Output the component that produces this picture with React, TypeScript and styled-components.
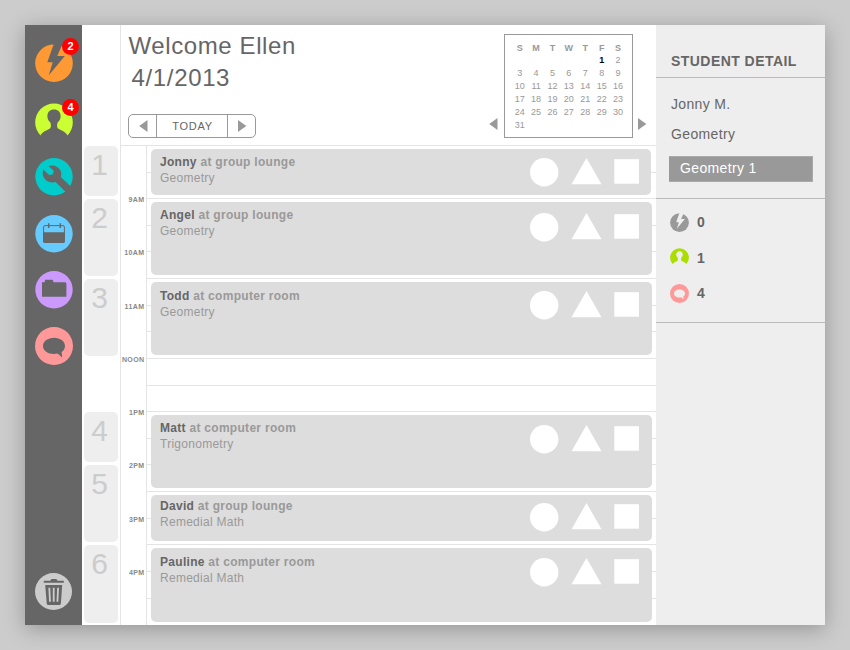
import React from "react";
import styled, { createGlobalStyle } from "styled-components";

const GlobalStyle = createGlobalStyle`
  * { box-sizing: border-box; }
  body {
    margin: 0;
    background: #cccccc;
    font-family: "Liberation Sans", Arial, sans-serif;
    color: #666666;
  }
`;

const Page = styled.div`
  width: 850px;
  height: 650px;
  padding: 25px;
  overflow: hidden;
`;

const Window = styled.div`
  display: grid;
  grid-template-columns: 57px 574px 169px;
  width: 800px;
  height: 600px;
  background: #ffffff;
  box-shadow: 0 4px 20px rgba(0, 0, 0, 0.27);
`;

/* ---------- Sidebar ---------- */

const Sidebar = styled.nav`
  display: flex;
  flex-direction: column;
  justify-content: space-between;
  align-items: center;
  padding: 19px 0 15px;
  background: #666666;
`;

const NavList = styled.div`
  display: grid;
  grid-template-rows: 59px 55px 57px 56px 56px 38px;
`;

const NavItem = styled.div`
  position: relative;
  width: 38px;
  height: 38px;
`;

const Badge = styled.span<{ $top: number }>`
  position: absolute;
  top: ${(p) => p.$top}px;
  right: -6.5px;
  width: 17px;
  height: 17px;
  border-radius: 50%;
  background: #ff0000;
  color: #ffffff;
  font-size: 11px;
  font-weight: bold;
  line-height: 17px;
  text-align: center;
`;

const Icon = styled.svg<{ $size?: number }>`
  display: block;
  width: ${(p) => p.$size ?? 38}px;
  height: ${(p) => p.$size ?? 38}px;
`;

interface IconProps {
  color: string;
  cut?: string;
  size?: number;
}

const BoltIcon = ({ color, cut = "#666666", size }: IconProps) => (
  <Icon $size={size} viewBox="0 0 38 38">
    <circle cx="19" cy="19.2" r="18.8" fill={color} />
    <path d="M19-.6 12.3 18.300h5.400L13.800 31.300 29.800 11.900h-7.600L28-1z" fill={cut} />
  </Icon>
);

const PersonIcon = ({ color, cut = "#666666", size }: IconProps) => (
  <Icon $size={size} viewBox="0 0 38 38">
    <circle cx="19" cy="19.4" r="18.8" fill={color} />
    <path
      d="M19 6.600c-4 0-6.600 2.700-6.600 6.600 0 3 1.300 4.700 3 6.200.7 2.800.8 5-.4 6-2.200 1.600-6.500 2.300-9.500 6.600L4 39h30l-1.500-7c-3-4.300-7.300-5-9.500-6.600-1.200-1-1.100-3.200-.4-6 1.700-1.500 3-3.200 3-6.200 0-3.900-2.600-6.600-6.600-6.600z"
      fill={cut}
    />
  </Icon>
);

const WrenchIcon = ({ color }: IconProps) => (
  <Icon viewBox="0 0 38 38">
    <circle cx="19" cy="18.700" r="18.700" fill={color} />
    <path
      d="M13.500 8c5-1.700 10 .3 12 4.600 1 2.400.9 4.500.3 6.400L36 28.800 31 34.300 20.600 24.100c-3.700 1.200-8 .2-10.600-2.800-2.500-3-2.800-6.400-1.700-9.700l5.800 5.400 3.600-.4 1.100-3.700z"
      fill="#666666"
    />
  </Icon>
);

const CalendarIcon = ({ color }: IconProps) => (
  <Icon viewBox="0 0 38 38">
    <circle cx="19" cy="18.700" r="18.700" fill={color} />
    <rect x="8.600" y="10.600" width="20.800" height="16.600" rx="1.500" fill={color} stroke="#666666" />
    <path d="M8.100 17.300h21.800v9.200a1.500 1.500 0 0 1-1.500 1.500H9.600a1.500 1.500 0 0 1-1.500-1.500z" fill="#666666" />
    <path d="M13.700 8.300v4.700M25.300 8.300v4.700" stroke="#666666" strokeWidth="1.500" />
  </Icon>
);

const FolderIcon = ({ color }: IconProps) => (
  <Icon viewBox="0 0 38 38">
    <circle cx="19" cy="18.700" r="18.700" fill={color} />
    <path d="M7 11.200h2.500l.8-2.400h7.400l.8 2.400h12.300v1h.6v13.600H7z" fill="#666666" />
  </Icon>
);

const SpeechIcon = ({ color, cut = "#666666", size }: IconProps) => (
  <Icon $size={size} viewBox="0 0 38 38">
    <circle cx="19" cy="19" r="19" fill={color} />
    <path
      d="M19 10.800c6.200 0 11 3.600 11 8.100 0 2.500-1.300 4.700-3.400 6.100l.7 5.500-4.800-4c-1.100.3-2.300.4-3.500.4-6.200 0-11-3.500-11-8s4.800-8.100 11-8.100z"
      fill={cut}
    />
  </Icon>
);

const TrashIcon = ({ color }: IconProps) => (
  <Icon $size={37} viewBox="0 0 37 37">
    <circle cx="18.500" cy="18.500" r="18.500" fill={color} />
    <path d="M8.800 7.800h6.400l1.300-1.700h4.800l1.300 1.700h6.200v2H8.800z" fill="#666666" />
    <path d="M10.200 12h17l-1.300 18.500a1.800 1.800 0 0 1-1.800 1.600H13.500a1.800 1.800 0 0 1-1.800-1.600z" fill="#666666" />
    <path d="M14.300 14.700l.7 14M18.700 14.700v14M23.100 14.700l-.7 14" stroke={color} strokeWidth="1.800" />
  </Icon>
);

/* ---------- Header ---------- */

const Main = styled.main`
  display: grid;
  grid-template-rows: 120px 480px;
`;

const Header = styled.header`
  display: flex;
  justify-content: space-between;
  margin-left: 38px;
  padding: 7px 9px 0 7px;
  border-left: 1px solid #e4e4e4;
`;

const Greeting = styled.h1`
  margin: -0.5px 0 0 0.5px;
  font-size: 24px;
  font-weight: normal;
  line-height: 27px;
  letter-spacing: 0.6px;
  white-space: nowrap;
`;

const Today = styled.div`
  margin: 5px 0 0 3.5px;
  font-size: 24px;
  line-height: 27px;
  letter-spacing: 0.65px;
`;

const DateNav = styled.div`
  display: grid;
  grid-template-columns: 27px 72px 27px;
  width: 128px;
  height: 24px;
  margin-top: 23.5px;
  border: 1px solid #999999;
  border-radius: 5px;
`;

const DateButton = styled.div<{ $divided?: boolean }>`
  display: flex;
  align-items: center;
  justify-content: center;
  padding-left: 1px;
  border: solid #999999;
  border-width: ${(p) => (p.$divided ? "0 1px" : "0")};
  font-size: 11px;
  letter-spacing: 0.75px;
`;

const Arrow = styled.svg`
  display: block;
  width: 9px;
  height: 12px;
  fill: #999999;
`;

const ArrowLeft = () => (
  <Arrow viewBox="0 0 9 12"><path d="M8.500 0v12L.2 6z" /></Arrow>
);
const ArrowRight = () => (
  <Arrow viewBox="0 0 9 12"><path d="M0 0v12l8.300-6z" /></Arrow>
);

const MonthPicker = styled.div`
  display: flex;
  align-items: flex-end;
  gap: 5px;
  height: 106px;
  padding-top: 2px;
  & > svg { margin-bottom: 8px; }
  & > svg:first-child { margin-right: 1px; }
`;

const Month = styled.div`
  display: grid;
  grid-template-columns: repeat(7, 16.400px);
  grid-template-rows: 12px repeat(6, 13px);
  width: 129px;
  height: 104px;
  padding: 7px 0 0 6.5px;
  border: 1px solid #999999;
`;

const Day = styled.span<{ $heading?: boolean; $current?: boolean }>`
  font-size: 9px;
  line-height: 13px;
  text-align: center;
  color: ${(p) => (p.$current ? "#000000" : "#999999")};
  font-weight: ${(p) => (p.$heading || p.$current ? "bold" : "normal")};
`;

/* ---------- Schedule ---------- */

const slotRows = "27px 26px 27px 26px 27px 27px 26px 27px 27px 26px 27px 26px 27px 27px 26px 27px 27px 27px";

const Schedule = styled.section`
  display: grid;
  grid-template-columns: 38px 26px 510px;
  grid-template-rows: ${slotRows};
`;

const Period = styled.div<{ $from: number; $to: number }>`
  grid-column: 1;
  grid-row: ${(p) => p.$from} / ${(p) => p.$to};
  margin: 1px 2px 2.5px;
  padding-right: 3px;
  border-radius: 5px;
  background: #eeeeee;
  color: #cccccc;
  font-size: 30px;
  line-height: 38px;
  text-align: center;
`;

const TimeColumn = styled.div`
  grid-column: 2;
  grid-row: 1 / -1;
  border-left: 1px solid #e4e4e4;
  border-top: 1px solid #e4e4e4;
`;

const TimeLabel = styled.div<{ $row: number }>`
  grid-column: 2;
  grid-row: ${(p) => p.$row};
  justify-self: end;
  height: 10px;
  margin: -3px 1.5px 0 0;
  font-size: 7px;
  font-weight: bold;
  line-height: 10px;
  letter-spacing: 0.4px;
  color: #888888;
`;

const Slot = styled.div<{ $row: number }>`
  grid-column: 3;
  grid-row: ${(p) => p.$row};
  border-top: 1px solid #e4e4e4;
  border-left: 1px solid #e4e4e4;
`;

const Session = styled.article<{ $from: number; $to: number; $first: boolean }>`
  grid-column: 3;
  grid-row: ${(p) => p.$from} / ${(p) => p.$to};
  display: flex;
  justify-content: space-between;
  margin: ${(p) => (p.$first ? "4px 5px 3px 4.5px" : "3.5px 4px 3px 4.5px")};
  padding: 0 ${(p) => (p.$first ? 12 : 13)}px 0 9.5px;
  border-radius: 5px;
  background: #dddddd;
`;

const SessionText = styled.div<{ $top: number }>`
  padding-top: ${(p) => p.$top}px;
  font-size: 12px;
  line-height: 16px;
  letter-spacing: 0.27px;
  color: #999999;
`;

const SessionTitle = styled.div`
  font-weight: bold;
  letter-spacing: 0.29px;
`;

const Student = styled.span`
  color: #666666;
`;

const Shapes = styled.svg<{ $top: number }>`
  width: 109px;
  height: 29px;
  margin-top: ${(p) => p.$top}px;
  fill: #ffffff;
`;

/* ---------- Detail panel ---------- */

const Detail = styled.aside`
  background: #eeeeee;
`;

const DetailTitle = styled.h2`
  height: 53px;
  margin: 0;
  padding: 28px 0 0 15px;
  border-bottom: 1px solid #bbbbbb;
  font-size: 14px;
  line-height: 17px;
  letter-spacing: 0.45px;
  white-space: nowrap;
`;

const Course = styled.div`
  height: 121px;
  padding: 17px 12px 0 13px;
  border-bottom: 1px solid #bbbbbb;
  font-size: 14px;
  line-height: 18px;
  letter-spacing: 0.35px;
`;

const CourseLine = styled.div`
  height: 30px;
  padding-left: 2px;
`;

const Selected = styled.div`
  height: 26px;
  margin-top: 1px;
  padding-left: 11px;
  line-height: 23px;
  background: #999999;
  color: #ffffff;
  border: 1px solid #aaaaaa;
  border-width: 1px 1px 1px 0;
`;

const Stats = styled.div`
  height: 124px;
  padding: 13px 0 0 14px;
  border-bottom: 1px solid #bbbbbb;
`;

const Stat = styled.div`
  display: flex;
  align-items: center;
  gap: 8px;
  height: 20px;
  margin-bottom: 15.5px;
  font-size: 14px;
  font-weight: bold;
  line-height: 18px;
`;

const weekdays = ["S", "M", "T", "W", "T", "F", "S"];

/* The month starts on a Friday, so five blank cells come first. */
const blankDays = 5;
const daysInMonth = 31;

const periods = [
  { n: 1, from: 1, to: 3 },
  { n: 2, from: 3, to: 6 },
  { n: 3, from: 6, to: 9 },
  { n: 4, from: 11, to: 13 },
  { n: 5, from: 13, to: 16 },
  { n: 6, from: 16, to: 19 },
];

const times = [
  { label: "9AM", row: 3 },
  { label: "10AM", row: 5 },
  { label: "11AM", row: 7 },
  { label: "NOON", row: 9 },
  { label: "1PM", row: 11 },
  { label: "2PM", row: 13 },
  { label: "3PM", row: 15 },
  { label: "4PM", row: 17 },
];

const sessions = [
  { name: "Jonny", place: "group lounge", subject: "Geometry", from: 1, to: 3, textTop: 5, shapeTop: 9 },
  { name: "Angel", place: "group lounge", subject: "Geometry", from: 3, to: 6, textTop: 5.5, shapeTop: 11.5 },
  { name: "Todd", place: "computer room", subject: "Geometry", from: 6, to: 9, textTop: 6.5, shapeTop: 9.5 },
  { name: "Matt", place: "computer room", subject: "Trigonometry", from: 11, to: 14, textTop: 5.5, shapeTop: 10.5 },
  { name: "David", place: "group lounge", subject: "Remedial Math", from: 14, to: 16, textTop: 3.5, shapeTop: 8.5 },
  { name: "Pauline", place: "computer room", subject: "Remedial Math", from: 16, to: 19, textTop: 6.5, shapeTop: 10.5 },
];

export default function App() {
  return (
    <Page>
      <GlobalStyle />
      <Window>
        <Sidebar>
          <NavList>
            <NavItem><BoltIcon color="#ff9933" /><Badge $top={-6}>2</Badge></NavItem>
            <NavItem><PersonIcon color="#ccff33" /><Badge $top={-4}>4</Badge></NavItem>
            <NavItem><WrenchIcon color="#00cccc" /></NavItem>
            <NavItem><CalendarIcon color="#66ccff" /></NavItem>
            <NavItem><FolderIcon color="#cc99ff" /></NavItem>
            <NavItem><SpeechIcon color="#ff9999" /></NavItem>
          </NavList>
          <TrashIcon color="#cccccc" />
        </Sidebar>

        <Main>
          <Header>
            <div>
              <Greeting>Welcome Ellen</Greeting>
              <Today>4/1/2013</Today>
              <DateNav>
                <DateButton><ArrowLeft /></DateButton>
                <DateButton $divided>TODAY</DateButton>
                <DateButton><ArrowRight /></DateButton>
              </DateNav>
            </div>
            <MonthPicker>
              <ArrowLeft />
              <Month>
                {weekdays.map((d, i) => <Day key={i} $heading>{d}</Day>)}
                {Array.from({ length: blankDays + daysInMonth }, (_, i) => (
                  <Day key={`d${i}`} $current={i === blankDays}>
                    {i >= blankDays ? i - blankDays + 1 : ""}
                  </Day>
                ))}
              </Month>
              <ArrowRight />
            </MonthPicker>
          </Header>

          <Schedule>
            <TimeColumn />
            {slotRows.split(" ").map((_, i) => <Slot key={i} $row={i + 1} />)}
            {periods.map((p) => <Period key={p.n} $from={p.from} $to={p.to}>{p.n}</Period>)}
            {times.map((t) => <TimeLabel key={t.label} $row={t.row}>{t.label}</TimeLabel>)}
            {sessions.map((s, i) => (
              <Session key={s.name} $from={s.from} $to={s.to} $first={i === 0}>
                <SessionText $top={s.textTop}>
                  <SessionTitle><Student>{s.name}</Student> at {s.place}</SessionTitle>
                  {s.subject}
                </SessionText>
                <Shapes $top={s.shapeTop} viewBox="0 0 109 29">
                  <circle cx="14.200" cy="14.300" r="14.200" />
                  <path d="M56.500 0l15 26.300h-30z" />
                  <rect x="84.300" y="1.200" width="24.700" height="24.500" />
                </Shapes>
              </Session>
            ))}
          </Schedule>
        </Main>

        <Detail>
          <DetailTitle>STUDENT DETAIL</DetailTitle>
          <Course>
            <CourseLine>Jonny M.</CourseLine>
            <CourseLine>Geometry</CourseLine>
            <Selected>Geometry 1</Selected>
          </Course>
          <Stats>
            <Stat><BoltIcon color="#999999" cut="#eeeeee" size={19} />0</Stat>
            <Stat><PersonIcon color="#aadd00" cut="#eeeeee" size={19} />1</Stat>
            <Stat><SpeechIcon color="#ff9999" cut="#eeeeee" size={19} />4</Stat>
          </Stats>
        </Detail>
      </Window>
    </Page>
  );
}
